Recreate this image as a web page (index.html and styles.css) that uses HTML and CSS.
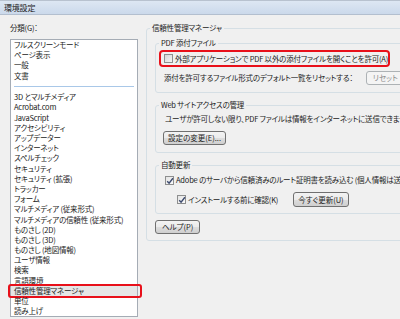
FILE: index.html
```html
<!DOCTYPE html>
<html lang="ja">
<head>
  <meta charset="UTF-8">
  <title>環境設定</title>
  <link rel="stylesheet" href="styles.css">
</head>
<body>
  <div class="titlebar">環境設定</div>

  <div class="content">
    <div class="sidebar">
      <div class="caption">分類(G)：</div>
      <ul class="category-list">
        <li>フルスクリーンモード</li>
        <li>ページ表示</li>
        <li>一般</li>
        <li>文書</li>
        <li class="sep"></li>
        <li>3D とマルチメディア</li>
        <li>Acrobat.com</li>
        <li>JavaScript</li>
        <li>アクセシビリティ</li>
        <li>アップデーター</li>
        <li>インターネット</li>
        <li>スペルチェック</li>
        <li>セキュリティ</li>
        <li>セキュリティ (拡張)</li>
        <li>トラッカー</li>
        <li>フォーム</li>
        <li>マルチメディア (従来形式)</li>
        <li>マルチメディアの信頼性 (従来形式)</li>
        <li>ものさし (2D)</li>
        <li>ものさし (3D)</li>
        <li>ものさし (地図情報)</li>
        <li>ユーザ情報</li>
        <li>検索</li>
        <li>言語環境</li>
        <li class="selected">信頼性管理マネージャ</li>
        <li>単位</li>
        <li>読み上げ</li>
      </ul>
    </div>

    <fieldset class="group outer">
      <legend>信頼性管理マネージャ</legend>

      <fieldset class="group">
        <legend>PDF 添付ファイル</legend>
        <div class="row marked"><span class="check"></span>外部アプリケーションで PDF 以外の添付ファイルを開くことを許可(A)</div>
        <div class="row reset-row">添付を許可するファイル形式のデフォルト一覧をリセットする：<button class="btn" disabled>リセット</button></div>
      </fieldset>

      <fieldset class="group">
        <legend>Web サイトアクセスの管理</legend>
        <div class="row text-row">ユーザが許可しない限り、PDF ファイルは情報をインターネットに送信できません。</div>
        <button class="btn change-btn">設定の変更(E)...</button>
      </fieldset>

      <fieldset class="group">
        <legend>自動更新</legend>
        <div class="row check-row"><span class="check checked"><svg width="8" height="8" viewBox="0 0 8 8"><path d="M1.2 4.2 L3.1 6.2 L6.9 1.3" fill="none" stroke="#3c4a6e" stroke-width="1.4"/></svg></span>Adobe のサーバから信頼済みのルート証明書を読み込む (個人情報は送信されません)</div>
        <div class="row sub-row"><span class="check checked"><svg width="8" height="8" viewBox="0 0 8 8"><path d="M1.2 4.2 L3.1 6.2 L6.9 1.3" fill="none" stroke="#3c4a6e" stroke-width="1.4"/></svg></span>インストールする前に確認(K)<button class="btn update-btn">今すぐ更新(U)</button></div>
      </fieldset>

      <button class="btn help-btn">ヘルプ(P)</button>
    </fieldset>
  </div>
</body>
</html>
```

FILE: styles.css
```css
html, body { margin: 0; width: 400px; height: 319px; overflow: hidden; }
body { background: #f0f0f0; color: #222; font-family: "Noto Sans CJK JP", "Noto Sans", sans-serif; font-size: 7.5px; letter-spacing: -0.2px; line-height: 10px; font-feature-settings: "palt"; }

.titlebar { height: 13px; line-height: 13px; padding-left: 4px; font-size: 8px; background: linear-gradient(#dde7f3, #cbd9eb); border-top: 1px solid #b8c2cf; border-bottom: 1px solid #b3bfcf; }

.content { display: flex; align-items: flex-start; padding-top: 8px; }

.sidebar { margin-left: 10px; width: 128px; flex: none; }
.caption { height: 10px; margin-bottom: 6px; }
.category-list { list-style: none; margin: 0; padding: 0; background: #fff; border: 1px solid #a5acb5; }
.category-list li { position: relative; height: 10.2px; line-height: 10.2px; padding-left: 3px; white-space: nowrap; }
.category-list li.sep { height: 11.5px; margin: 0 3px; background: linear-gradient(#a9c8e8, #a9c8e8) center / 100% 1px no-repeat; }
.category-list li.selected { background: #e6e6e6; }
.category-list li.selected::after { content: ""; position: absolute; left: -3px; right: -5px; top: -2px; bottom: -2px; border: 2px solid #e8101a; border-radius: 3px; }

.group { margin: 0; border: 1px solid #d5dfe5; border-radius: 3px; padding: 2px 3px 7px; min-width: 0; }
.group legend { padding: 0 2px; height: 10px; line-height: 10px; }
.outer { margin-left: 8px; width: 300px; flex: none; padding: 5px 8px 6px; }
.outer > legend { margin-left: -5px; }
.group + .group { margin-top: 7px; }
.group:last-of-type { padding-bottom: 6px; }

.row { white-space: nowrap; display: flex; align-items: center; }
.marked { border: 2px solid #e8101a; border-radius: 4px; height: 13px; padding-left: 3px; width: 224px; }
.reset-row { margin-top: 4px; padding-left: 5px; height: 14px; gap: 13px; }
.text-row { padding-left: 6px; margin-top: 2px; }
.check-row { padding-left: 6px; margin-top: 3px; }
.sub-row { padding-left: 18px; margin-top: 7px; }

.check { display: inline-block; width: 7px; height: 7px; border: 1px solid #8e8f8f; background: linear-gradient(135deg, #d6d6d6, #f4f4f4); margin-right: 2px; flex: none; position: relative; }
.check svg { display: block; position: absolute; left: 0; top: 0; }
.check.checked { background: linear-gradient(135deg, #e4e4e4, #fafafa); }

.btn { font: inherit; color: #222; height: 14px; line-height: 12px; padding: 0 6px; border: 1px solid #707070; border-radius: 3px; background: linear-gradient(#f3f3f3 0%, #ebebeb 50%, #dddddd 51%, #cfcfcf 100%); }
.btn:disabled { color: #8a8a8a; border-color: #adb2b5; background: #f4f4f4; }
.change-btn { margin: 7px 0 0 4px; padding: 0 4px; }
.update-btn { margin-left: 15px; height: 15px; padding: 0 4px; }
.help-btn { margin-top: 6px; }
```
